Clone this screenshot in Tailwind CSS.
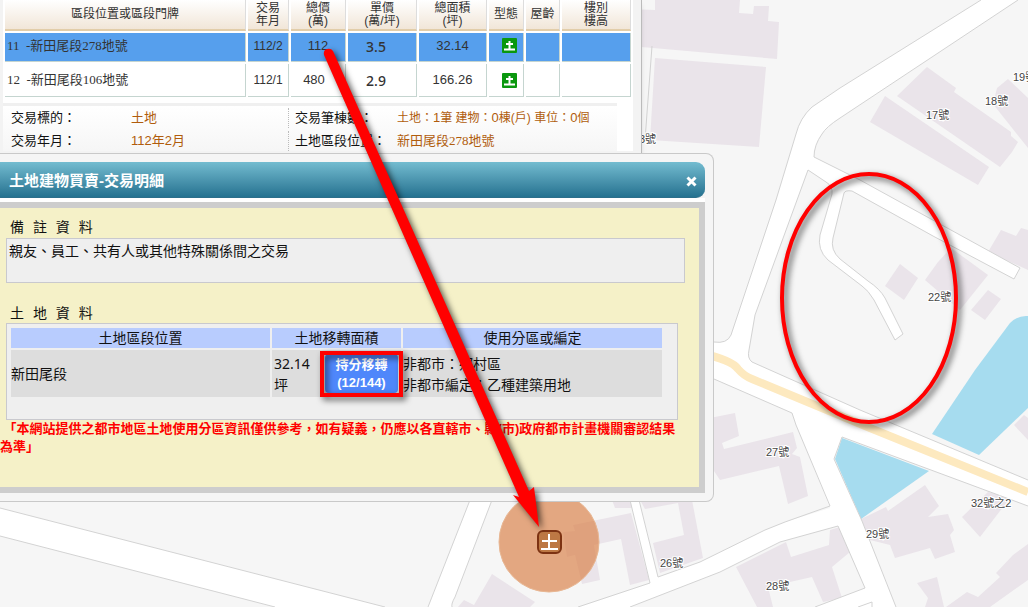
<!DOCTYPE html>
<html lang="zh-Hant">

<head>
    <meta charset="UTF-8">
    <meta name="viewport" content="width=device-width, initial-scale=1.0">
    <title>土地建物買賣-交易明細</title>
    <script src="https://cdn.jsdelivr.net/npm/@tailwindcss/browser@4"></script>
</head>

<body class="relative h-screen overflow-hidden bg-[#f6f6f6] font-['Liberation_Sans','Noto_Sans_CJK_TC',sans-serif] text-[#111]">
    <!-- Map -->
    <svg class="absolute top-0 left-0 h-full w-full" viewBox="0 0 1028 607" preserveAspectRatio="xMinYMin slice" role="img" aria-label="地圖">
        <!-- Buildings -->
        <g fill="#eae4ea">
            <path d="M630 9L655 10V0H740L739 13L753 14L754 6H769L768 21L779 22L777 59L630 46Z" />
            <path d="M655 58L766 67L759 147L650 140Z" />
            <path d="M927 67L956 88L954 92L1011 132L1011 136L1018 142L1012 152L1000 167L897 96Z" />
            <path d="M885 96L989 167L978 185L870 122Z" />
            <path d="M1008 79L1028 98V148L993 104L997 88Z" />
            <path d="M900 264L918 278L904 300L885 286Z" />
            <path d="M951 248L988 275L960 310L925 280L938 262Z" />
            <path d="M988 290L1001 299L985 320L971 310Z" />
            <path d="M1001 230L1016 236L1021 228L1028 230V270L988 252Z" />
            <path d="M1014 425L1024 415L1028 418V440Z" />
            <path d="M700 420L735 413L739 436L722 443L724 449L793 432L797 448L792 454L800 457L808 496L788 504L779 466L720 480L700 450Z" />
            <path d="M736 567L786 542L791 557L829 545L830 530L840 527L850 552L832 567L842 598L823 602L812 577L768 587L773 607H757Z" />
            <path d="M861 519L886 507L888 511L925 485L939 506L928 517L948 514L954 530L950 535L955 552L935 559L930 548L895 558L890 545L870 540Z" />
            <path d="M962 517L988 492L1010 498L980 537Z" />
            <path d="M917 583L937 577L944 607H925L928 598Z" />
            <path d="M946 607L967 592L978 597L1000 577L996 573L1013 555L1028 544V580L990 607Z" />
            <path d="M563 532L575 531L573 525L631 513L649 580L630 585L621 539L594 545L600 580L582 584L575 555L567 557Z" />
            <path d="M612 500H632L634 508H615Z" />
            <path d="M640 500H692L703 558L660 573L653 543L684 535L678 503L645 509Z" />
            <path d="M492 574L535 602L530 607H458L464 600L474 605Z" />
        </g>

        <!-- Ponds -->
        <g fill="#a6dcef">
            <path d="M1028 316Q1018 315 1010 323L975 370L932 434L979 455L1028 408Z" />
            <path d="M842 438L929 471L861 519L835 459Z" />
        </g>

        <!-- Roads -->
        <g fill="#fff">
            <path d="M981 0L840 88L812 107Q800 118 796 134L776 200L731 335Q727 344 714 342H700V373L714 379L792 413L796 425L830 508L785 522L765 530L700 562L658 577L639 500H630L650 583L578 607H630L720 572L780 542L838 526L865 588L815 607H896L862 521L834 459L842 437L1028 506V480L860 410L752 362Q747 358 749 350L755 315L808 170L826 182Q833 186 832 194L820 235Q817 250 828 260L862 286Q868 290 874 300L895 340L903 334L885 298Q880 289 868 281L840 259Q830 250 833 238L844 193Q845 190 852 191L933 236L1014 279L1020 268L860 180L814 157Q814 145 822 134Q826 127 840 118L1018 0Z" />
            <path d="M0 508L385 607H275L0 536Z" />
            <path d="M470 500L428 607H452Q451 604 455 597L492 500Z" />
        </g>
        <g fill="none" stroke="#d3d3d3">
            <path d="M981 0L840 88L812 107Q800 118 796 134L776 200L731 335Q727 344 714 342H700M700 373L714 379L792 413L796 425L830 506L785 522L765 530L700 562L658 577L639 500M630 500L650 583L578 607M630 607L720 572L780 542L838 526L865 588L815 607M896 607L862 521L834 459L842 437L1028 506M1028 480L860 410L752 362Q747 358 749 350L755 315L808 170L826 182Q833 186 832 194L820 235Q817 250 828 260L862 286Q868 290 874 300L895 340L903 334L885 298Q880 289 868 281L840 259Q830 250 833 238L844 193Q845 190 852 191L933 236L1014 279L1020 268L860 180L814 157Q814 145 822 134Q826 127 840 118L1018 0" />
            <path d="M0 508L385 607M0 536L275 607M470 500L428 607M492 500L455 597Q451 604 452 607M652 46L645 140M858 607L872 602V607" />
        </g>
        <path d="M700 353Q732 360 738 369Q744 376 752 379L870 428L1028 492" fill="none" stroke="#fde9bf" stroke-width="8" />

        <!-- Search radius and marker -->
        <circle cx="549" cy="542" r="50" fill="#da8249" fill-opacity=".68" stroke="#e8b793" />
        <rect x="538" y="531" width="23" height="22" rx="5" fill="#bd7844" stroke="#7c3212" stroke-width="2" />
        <path d="M542 541H557M549 534V549M541 549H558" stroke="#fff" stroke-width="2" />

        <!-- House numbers -->
        <g class="text-[11px]" fill="#444" stroke="#fff" stroke-width="2" paint-order="stroke">
            <text x="1013" y="81">19號</text>
            <text x="985" y="105">18號</text>
            <text x="926" y="119">17號</text>
            <text x="639" y="143">3號</text>
            <text x="928" y="301">22號</text>
            <text x="766" y="456">27號</text>
            <text x="971" y="507">32號之2</text>
            <text x="866" y="538">29號</text>
            <text x="660" y="567">26號</text>
            <text x="766" y="590">28號</text>
        </g>
    </svg>

    <!-- Result list -->
    <main class="absolute top-0 left-0 h-[170px] w-[642px] overflow-hidden border-r border-[#bbb] bg-[#f3f3f3] pl-[3px] shadow-md">
        <div class="-mt-[2px] w-[630px] bg-white">
            <table class="w-full table-fixed border-separate border-spacing-[2px] text-center text-[13px] leading-[16px] text-[#333]">
                <colgroup>
                    <col>
                    <col class="w-[41px]">
                    <col class="w-[55px]">
                    <col class="w-[69px]">
                    <col class="w-[68px]">
                    <col class="w-[35px]">
                    <col class="w-[34px]">
                    <col class="w-[69px]">
                </colgroup>
                <thead class="text-[12px] leading-[13px] [&_th]:h-[31px] [&_th]:border-r [&_th]:border-b-2 [&_th]:border-r-[#ddd] [&_th]:border-b-[#e2cda9] [&_th]:bg-linear-to-b [&_th]:from-white [&_th]:to-[#f1e6d8] [&_th]:p-0 [&_th]:font-normal">
                    <tr>
                        <th>區段位置或區段門牌</th>
                        <th>交易<br>年月</th>
                        <th>總價<br>(萬)</th>
                        <th>單價<br>(萬/坪)</th>
                        <th>總面積<br>(坪)</th>
                        <th>型態</th>
                        <th>屋齡</th>
                        <th>樓別<br>樓高</th>
                    </tr>
                </thead>
                <tbody class="[&_td]:border-r [&_td]:border-b [&_td]:border-[#c5d5d0] [&_td]:p-0">
                    <tr class="[&_td]:h-[29px] [&_td]:bg-[#569fed] [&_td]:pb-[3px]">
                        <td class="text-left font-['Liberation_Serif','Noto_Sans_CJK_TC',serif] whitespace-pre"><span class="pl-[2px]">11  -新田尾段278地號</span></td>
                        <td class="text-[12px]">112/2</td>
                        <td class="pr-2">112</td>
                        <td class="font-['Noto_Sans',sans-serif] text-[14px] font-medium"><span class="mr-3 inline-block pt-[2px]">3.5</span></td>
                        <td>32.14</td>
                        <td>
                            <svg class="mx-auto size-[15px] translate-x-[3px]" viewBox="0 0 15 15" role="img" aria-label="土地">
                                <rect width="15" height="15" rx="1" fill="#0a980e" />
                                <path d="M4 6H11M7.5 3V11M2 11.5H13" stroke="#fff" stroke-width="2" />
                            </svg>
                        </td>
                        <td></td>
                        <td></td>
                    </tr>
                    <tr class="[&_td]:h-[33px]">
                        <td class="text-left font-['Liberation_Serif','Noto_Sans_CJK_TC',serif] whitespace-pre"><span class="pl-[2px]">12  -新田尾段106地號</span></td>
                        <td class="text-[12px]">112/1</td>
                        <td><span class="mr-2">480</span></td>
                        <td class="font-['Noto_Sans',sans-serif] text-[14px] font-medium"><span class="mr-3 inline-block pt-[2px]">2.9</span></td>
                        <td>166.26</td>
                        <td>
                            <svg class="mx-auto size-[15px] translate-x-[3px]" viewBox="0 0 15 15" role="img" aria-label="土地">
                                <rect width="15" height="15" rx="1" fill="#0a980e" />
                                <path d="M4 6H11M7.5 3V11M2 11.5H13" stroke="#fff" stroke-width="2" />
                            </svg>
                        </td>
                        <td></td>
                        <td></td>
                    </tr>
                </tbody>
            </table>
            <div class="h-1 bg-white"></div>
            <dl class="mr-4 grid grid-cols-[119px_166px_100px_1fr] gap-y-[3px] border-t-[3px] border-[#f0f0f0] bg-linear-to-b from-white to-[#f6f6f6] pt-[2px] text-[13px] leading-5 [&_dd]:pl-[9px] [&_dd]:text-[#b05c0c] [&_dt]:whitespace-nowrap">
                <dt class="pl-2">交易標的：</dt>
                <dd>土地</dd>
                <dt class="border-l border-dotted border-[#bbb] pl-[6px]">交易筆棟數：</dt>
                <dd class="text-[12px]">土地：<span class="text-[13px]">1</span>筆 建物：<span class="text-[13px]">0</span>棟(戶) 車位：<span class="text-[13px]">0</span>個</dd>
                <dt class="pl-2">交易年月：</dt>
                <dd>112年2月</dd>
                <dt class="border-l border-dotted border-[#bbb] pl-[6px]">土地區段位置：</dt>
                <dd class="font-['Liberation_Serif','Noto_Sans_CJK_TC',serif]">新田尾段278地號</dd>
            </dl>
        </div>
    </main>

    <!-- Transaction dialog -->
    <section role="dialog" aria-labelledby="dialog-title" class="absolute top-[153px] left-0 w-[714px] rounded-r-lg border-y border-r border-[#c9c9c9] bg-[#f5f5f5] py-2 pr-2">
        <header class="flex h-9 items-center justify-between rounded-r-[9px] border-b border-[#2c6f8b] bg-linear-to-b from-[#73bcd0] to-[#247290] pt-1 pr-2 pl-[9px] text-white">
            <h1 id="dialog-title" class="text-[15px] font-bold">土地建物買賣-交易明細</h1>
            <button type="button" aria-label="關閉" class="size-[11px]">
                <svg viewBox="0 0 11 11" fill="none" stroke="currentColor" stroke-width="3">
                    <path d="M1.5 1.5L9.5 9.5M9.5 1.5L1.5 9.5" />
                </svg>
            </button>
        </header>
        <div class="border-t-4 border-white">
            <div class="h-[291px] border-y-6 border-r-6 border-[#cdcdcd] bg-[#f5f1c8] pt-[9px] text-[14px] leading-5">
                <h2 class="pl-[10px] font-['DejaVu_Sans','Noto_Sans_CJK_TC',sans-serif] whitespace-pre">備  註  資  料</h2>
                <p class="mt-px mr-[14px] ml-[6px] h-[45px] border border-[#c9c9ce] bg-[#efefef] px-[2px] pt-[2px]">親友、員工、共有人或其他特殊關係間之交易</p>
                <h2 class="mt-5 pl-[10px] font-['DejaVu_Sans','Noto_Sans_CJK_TC',sans-serif] whitespace-pre">土  地  資  料</h2>
                <div class="mr-[21px] ml-[6px] h-[97px] border border-[#c9c9ce] bg-[#efefef] pt-[2px] pr-[13px] pl-[2px]">
                    <table class="w-full table-fixed border-separate border-spacing-[2px] font-['Noto_Sans','Noto_Sans_CJK_TC',sans-serif]">
                        <colgroup>
                            <col>
                            <col class="w-[129px]">
                            <col>
                        </colgroup>
                        <thead class="[&_th]:h-5 [&_th]:bg-[#b8ccfe] [&_th]:p-0 [&_th]:font-normal">
                            <tr>
                                <th>土地區段位置</th>
                                <th>土地移轉面積</th>
                                <th>使用分區或編定</th>
                            </tr>
                        </thead>
                        <tbody class="[&_td]:h-[47px] [&_td]:bg-[#ddd] [&_td]:p-0 [&_td]:leading-[21px]">
                            <tr>
                                <td>新田尾段</td>
                                <td>
                                    <div class="flex items-center justify-between pr-[3px] pl-[2px]">
                                        <span class="w-10">32.14 坪</span>
                                        <button type="button" class="h-[39px] w-[73px] rounded bg-[#4f87fb] font-['Liberation_Sans','Noto_Sans_CJK_TC',sans-serif] text-[13px] leading-[18px] font-bold text-white">持分移轉 (12/144)</button>
                                    </div>
                                </td>
                                <td>非都市：鄉村區<br>非都市編定：乙種建築用地</td>
                            </tr>
                        </tbody>
                    </table>
                </div>
                <p class="text-[13px] leading-[18px] font-bold text-[#f00]">&nbsp;「本網站提供之都市地區土地使用分區資訊僅供參考，如有疑義，仍應以各直轄市、縣(市)政府都市計畫機關審認結果<br>為準」</p>
            </div>
        </div>
    </section>

    <!-- Annotations -->
    <svg class="pointer-events-none absolute top-0 left-0 drop-shadow-[3px_3px_3px_rgba(0,0,0,0.65)]" width="1028" height="607" viewBox="0 0 1028 607" fill="none" stroke="#f00" aria-hidden="true">
        <ellipse cx="869" cy="298" rx="87" ry="124" stroke-width="4" />
        <rect x="322" y="353" width="79" height="42" stroke-width="4" />
        <path d="M324 55Q323 50 327 49Q331 48 333 51L529 491L534 487L539 527L513 495L519 497Z" fill="#f00" stroke="none" />
    </svg>
</body>

</html>
